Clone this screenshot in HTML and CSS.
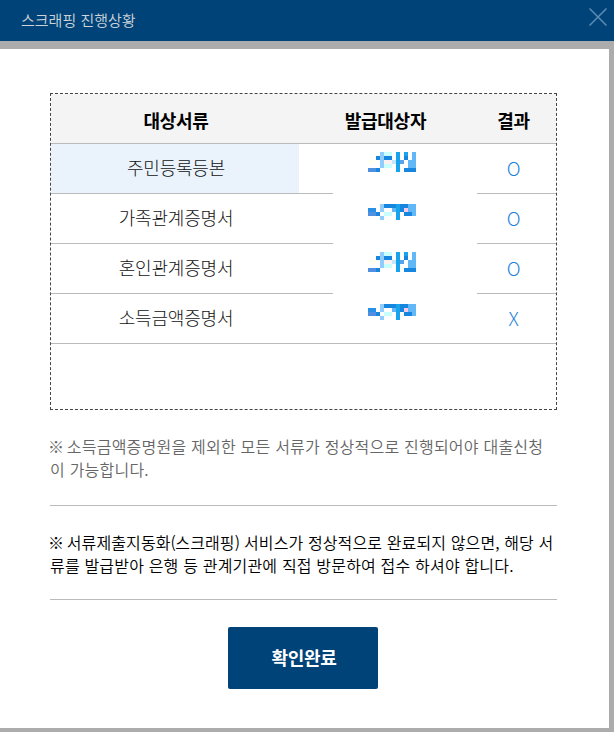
FILE: index.html
```html
<!DOCTYPE html>
<html lang="ko">
<head>
<meta charset="utf-8">
<title>스크래핑 진행상황</title>
<link rel="stylesheet" href="styles.css">
</head>
<body>
<svg class="defs" width="0" height="0" aria-hidden="true">
  <defs>
    <g id="mask-a">
      <path fill="#fffff2" d="M0 2h2v1h-2z"/>
      <path fill="#fff0f0" d="M4 2h2v1h-2z"/>
      <path fill="#c8ffff" d="M4 0h2v1h-2zM4 3h2v1h-2z"/>
      <path fill="#c0e8ff" d="M6 2h1v1h-1z"/>
      <path fill="#90cdfc" d="M3 0h1v4h-1z"/>
      <path fill="#62b8f6" d="M11 0h1v4h-1zM10 2h1v2h-1z"/>
      <path fill="#18a4ec" d="M7 0h1v5h-1zM9 0h1v1h-1z"/>
      <path fill="#1686de" d="M2 1h1v1h-1zM4 1h2v1h-2zM9 1h1v1h-1zM2 4h1v1h-1zM9 4h3v1h-3z"/>
      <path fill="#5090e0" d="M0 4h2v1h-2z"/>
      <path fill="#5aa2ea" d="M8 2h1v1h-1z"/>
    </g>
    <g id="mask-b">
      <path fill="#c8ffff" d="M4 2h2v1h-2z"/>
      <path fill="#90cdfc" d="M3 0h1v2h-1zM3 3h1v1h-1z"/>
      <path fill="#62b8f6" d="M10 0h2v1h-2zM11 1h1v2h-1zM10 1h1v1h-1zM6 1h1v1h-1z"/>
      <path fill="#1686de" d="M4 0h6v1h-6zM8 1h1v1h-1zM2 2h1v1h-1zM9 2h2v1h-2z"/>
      <path fill="#18a4ec" d="M7 0h1v4h-1z"/>
      <path fill="#2a90e6" d="M0 1h2v1h-2z"/>
      <path fill="#5090e0" d="M0 2h2v1h-2z"/>
      <path fill="#f8cce8" d="M9 1h1v1h-1z"/>
    </g>
  </defs>
</svg>
<div class="popup">
  <header class="titlebar">
    <h1>스크래핑 진행상황</h1>
    <svg class="close" width="18" height="18" viewBox="0 0 18 18"><path d="M.5.5l17 17M17.5.5l-17 17"/></svg>
  </header>
  <main class="content">
    <section class="result">
      <div class="row head"><span class="doc">대상서류</span><span>발급대상자</span><span class="state">결과</span></div>
      <div class="row"><span class="doc selected">주민등록등본</span><span></span><span class="state mark">O</span></div>
      <div class="row"><span class="doc">가족관계증명서</span><span></span><span class="state mark">O</span></div>
      <div class="row"><span class="doc">혼인관계증명서</span><span></span><span class="state mark">O</span></div>
      <div class="row"><span class="doc">소득금액증명서</span><span></span><span class="state mark">X</span></div>
      <svg class="names" width="144" height="199" viewBox="0 0 144 199" shape-rendering="crispEdges">
        <use href="#mask-a" transform="translate(35 8) scale(4)"/>
        <use href="#mask-b" transform="translate(35 60) scale(4)"/>
        <use href="#mask-a" transform="translate(35 108) scale(4)"/>
        <use href="#mask-b" transform="translate(35 160) scale(4)"/>
      </svg>
    </section>
    <p class="note muted"><span class="ref">※</span> 소득금액증명원을 제외한 모든 서류가 정상적으로 진행되어야 대출신청<br>이 가능합니다.</p>
    <p class="note"><span class="lead"><span class="ref">※</span> 서류제출지동화<span class="paren">(</span>스크래핑<span class="paren">)</span> 서비스가 정상적으로 완료되지 않으면, 해당 서</span><br>류를 발급받아 은행 등 관계기관에 직접 방문하여 접수 하셔야 합니다.</p>
    <button class="confirm">확인완료</button>
  </main>
</div>
</body>
</html>
```
FILE: styles.css
```css
* { box-sizing: border-box; }
body {
  margin: 0;
  background: #acacac;
  font-family: "Noto Sans CJK KR", "Noto Sans", sans-serif;
  color: #000;
}
.defs { position: absolute; }
.popup { height: 732px; overflow: hidden; }
.titlebar {
  display: flex;
  justify-content: space-between;
  height: 41px;
  padding: 0 7px 0 21px;
  background: #004379;
}
.titlebar h1 {
  margin: 0;
  font-size: 15px;
  font-weight: 350;
  line-height: 39px;
  color: #ccd3d8;
}
.close {
  margin-top: 8px;
  fill: none;
  stroke: #5c8cb4;
  stroke-width: 1.5;
}
.content {
  width: 609px;
  height: 679px;
  margin-top: 8px;
  padding: 44px 52px 0 50px;
  background: #fff;
}
.result {
  position: relative;
  height: 317px;
  border: 1px dashed #444;
}
.row {
  display: grid;
  grid-template-columns: 248px 173px 84px;
  grid-template-rows: 49px;
  height: 50px;
  border-bottom: 1px solid #bbb;
  font-size: 18px;
  font-weight: 300;
  line-height: 47px;
  text-align: center;
  letter-spacing: -0.2px;
  color: #111;
}
.row.head {
  background: #f4f4f4;
  font-weight: 700;
  line-height: 53px;
  letter-spacing: -0.3px;
  color: #000;
}
.doc { padding-left: 2px; }
.state { padding-right: 1px; }
.selected { background: #eaf3fb; }
.row .mark { font-size: 19px; line-height: 48px; color: #1b7fdc; }
.names {
  position: absolute;
  left: 282px;
  top: 50px;
  background: #fff;
}
.note {
  height: 96px;
  margin: 0;
  padding-top: 25px;
  border-bottom: 1px solid #bbb;
  font-size: 16px;
  font-weight: 350;
  line-height: 23px;
  letter-spacing: 0.18px;
  white-space: nowrap;
}
.note + .note { height: 94px; }
.note.muted { color: #666; letter-spacing: 0.22px; }
.lead { letter-spacing: 0.12px; }
.ref { margin-left: -2px; letter-spacing: -1.9px; }
.paren { letter-spacing: -0.6px; }
.confirm {
  display: block;
  width: 150px;
  height: 62px;
  margin: 27px 0 0 178px;
  padding: 0 0 2px 2px;
  border: 0;
  border-radius: 2px;
  background: #004379;
  color: #fff;
  font: 700 18px/60px "Noto Sans CJK KR", sans-serif;
  letter-spacing: -0.3px;
}
```
